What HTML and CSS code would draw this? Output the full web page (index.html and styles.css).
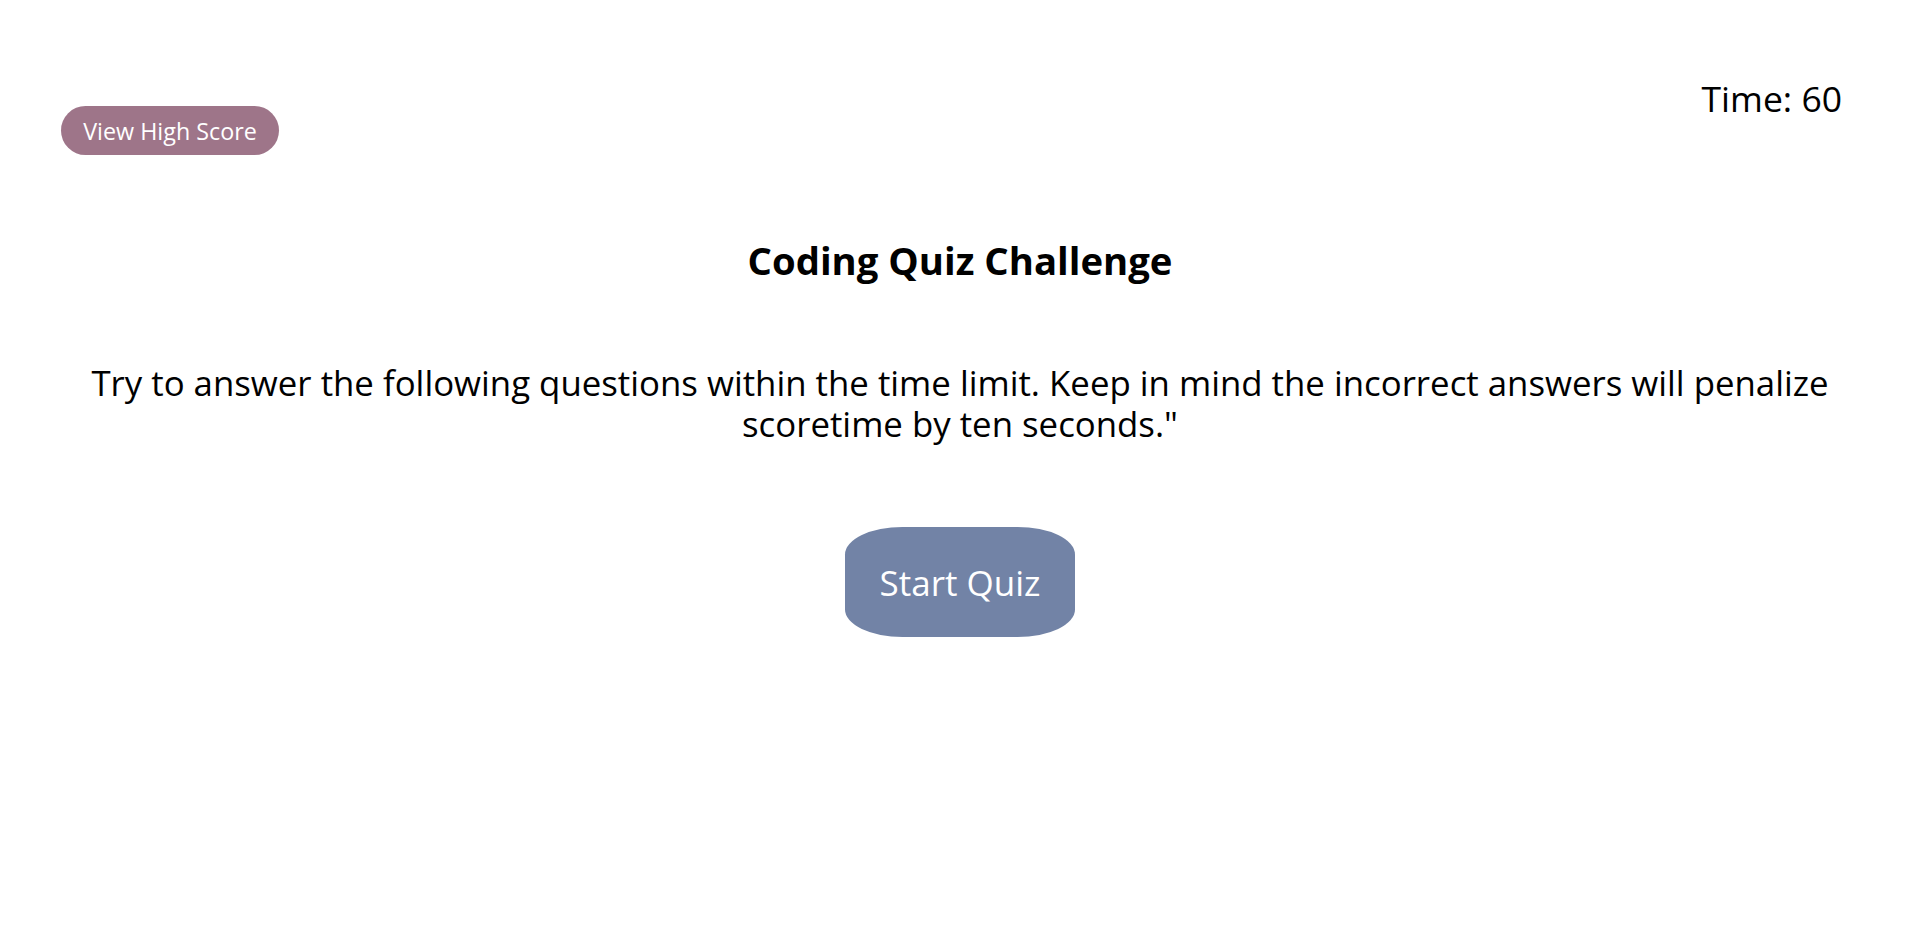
FILE: index.html
```html
<!DOCTYPE html>
<html lang="en">
<head>
<meta charset="utf-8">
<title>Coding Quiz</title>
<link rel="stylesheet" href="styles.css">
</head>
<body>
<header class="top">
  <button class="btn-high">View High Score</button>
  <div class="timer">Time: <span>60</span></div>
</header>
<main class="intro">
  <h1 class="title">Coding Quiz Challenge</h1>
  <p class="desc">Try to answer the following questions within the time limit. Keep in mind the incorrect answers will penalize scoretime by ten seconds."</p>
  <button class="btn-start">Start Quiz</button>
</main>
</body>
</html>
```
FILE: styles.css
```css
html, body {
  margin: 0;
  padding: 0;
  background: #ffffff;
  color: #000000;
  font-family: "Open Sans", "Noto Sans", sans-serif;
}
.top {
  display: flex;
  justify-content: space-between;
  align-items: flex-start;
  padding: 72px 78px 0 61px;
}
.btn-high {
  margin-top: 34px;
  width: 218px;
  height: 49px;
  border: none;
  border-radius: 25px;
  background: #9e7589;
  color: #ffffff;
  font-family: inherit;
  font-size: 23.3px;
  cursor: pointer;
}
.timer {
  margin-top: 6px;
  font-size: 35.5px;
  line-height: 40px;
}
.intro {
  display: flex;
  flex-direction: column;
  align-items: center;
  text-align: center;
  padding: 0 80px;
}
.title {
  margin: 81px 0 0;
  font-size: 38.3px;
  font-weight: 700;
  line-height: 48px;
}
.desc {
  margin: 78px 0 0;
  font-size: 34.8px;
  line-height: 41px;
}
.btn-start {
  margin-top: 83px;
  width: 230px;
  height: 110px;
  border: none;
  border-radius: 25%;
  background: #7283a6;
  color: #ffffff;
  font-family: inherit;
  font-size: 35px;
  cursor: pointer;
}
```
